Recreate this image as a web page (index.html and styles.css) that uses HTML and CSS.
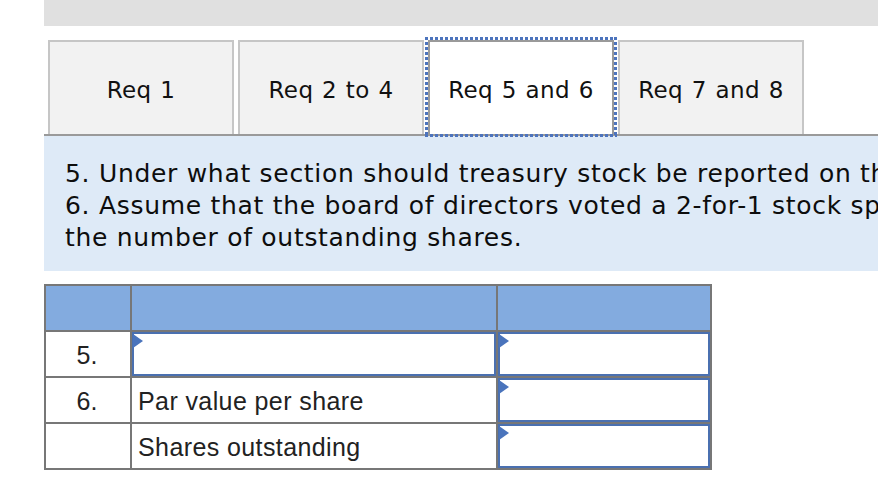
FILE: index.html
```html
<!DOCTYPE html>
<html lang="en">
<head>
<meta charset="utf-8">
<title>Req 5 and 6</title>
<link rel="stylesheet" href="styles.css">
</head>
<body>
<div class="page">
  <div class="topbar"></div>
  <div class="tabs">
    <div class="tab">Req 1</div>
    <div class="tab">Req 2 to 4</div>
    <div class="tab active">Req 5 and 6</div>
    <div class="tab">Req 7 and 8</div>
  </div>
  <div class="panel">
    <div class="line">5. Under what section should treasury stock be reported on the balance sheet?</div>
    <div class="line">6. Assume that the board of directors voted a 2-for-1 stock split. What would happen to the par value per share and</div>
    <div class="line">the number of outstanding shares.</div>
  </div>
  <div class="grid">
    <div class="hcell"></div>
    <div class="hcell"></div>
    <div class="hcell"></div>

    <div class="cell num">5.</div>
    <div class="cell"><div class="input"><span class="flag"></span></div></div>
    <div class="cell"><div class="input"><span class="flag"></span></div></div>

    <div class="cell num">6.</div>
    <div class="cell label">Par value per share</div>
    <div class="cell"><div class="input"><span class="flag"></span></div></div>

    <div class="cell num"></div>
    <div class="cell label">Shares outstanding</div>
    <div class="cell"><div class="input"><span class="flag"></span></div></div>
  </div>
</div>
</body>
</html>
```
FILE: styles.css
```css
html, body {
  margin: 0;
  padding: 0;
  background: #ffffff;
  overflow: hidden;
}
.page {
  margin-left: 44px;
  width: 834px;
  overflow: hidden;
}
.topbar {
  height: 26px;
  background: #e0e0e0;
}
.tabs {
  display: flex;
  align-items: flex-end;
  gap: 4px;
  margin-top: 14px;
  padding-left: 4px;
  border-bottom: 2px solid #9a9a9a;
}
.tab {
  position: relative;
  box-sizing: border-box;
  width: 186px;
  height: 94px;
  border: 2px solid #c6c6c6;
  border-bottom: 0;
  background: #f2f2f2;
  display: flex;
  align-items: center;
  justify-content: center;
  font-family: "DejaVu Sans", Verdana, sans-serif;
  font-size: 23px;
  letter-spacing: 0.4px;
  word-spacing: 1px;
  color: #111111;
  padding-top: 3px;
}
.tab.active {
  background: #ffffff;
  border-color: #9a9a9a;
}
.tab.active::after {
  content: "";
  position: absolute;
  top: -5px;
  left: -5px;
  right: -5px;
  bottom: -3px;
  pointer-events: none;
  background:
    repeating-linear-gradient(90deg, #4d74bd 0 3px, transparent 3px 5px) top left / 100% 3px no-repeat,
    repeating-linear-gradient(90deg, #4d74bd 0 3px, transparent 3px 5px) bottom left / 100% 3px no-repeat,
    repeating-linear-gradient(180deg, #4d74bd 0 3px, transparent 3px 5px) top left / 3px 100% no-repeat,
    repeating-linear-gradient(180deg, #4d74bd 0 3px, transparent 3px 5px) top right / 3px 100% no-repeat;
}
.panel {
  background: #deeaf7;
  padding: 22px 0 17px 21px;
  font-family: "DejaVu Sans", Verdana, sans-serif;
  font-size: 25px;
  line-height: 32px;
  letter-spacing: 0.7px;
  color: #0d0d0d;
}
.line {
  white-space: nowrap;
}
.grid {
  display: grid;
  grid-template-columns: 84px 364px 212px;
  grid-template-rows: 44px 44px 44px 44px;
  gap: 2px;
  padding: 2px;
  width: max-content;
  margin-top: 13px;
  background: #777777;
  font-family: "Liberation Sans", Arial, sans-serif;
  font-size: 25px;
  color: #222222;
}
.hcell {
  background: #83abdf;
}
.cell {
  background: #ffffff;
  display: flex;
  align-items: center;
}
.num {
  justify-content: center;
  padding-right: 2px;
  padding-top: 2px;
}
.label {
  padding-left: 6px;
  padding-top: 2px;
  letter-spacing: 0.4px;
}
.input {
  position: relative;
  box-sizing: border-box;
  width: 100%;
  height: 100%;
  border: 2px solid #4a70b0;
  background: #ffffff;
}
.flag {
  position: absolute;
  top: 0;
  left: -1px;
  width: 0;
  height: 0;
  border-top: 7px solid transparent;
  border-bottom: 7px solid transparent;
  border-left: 10px solid #4a74bc;
}
```
